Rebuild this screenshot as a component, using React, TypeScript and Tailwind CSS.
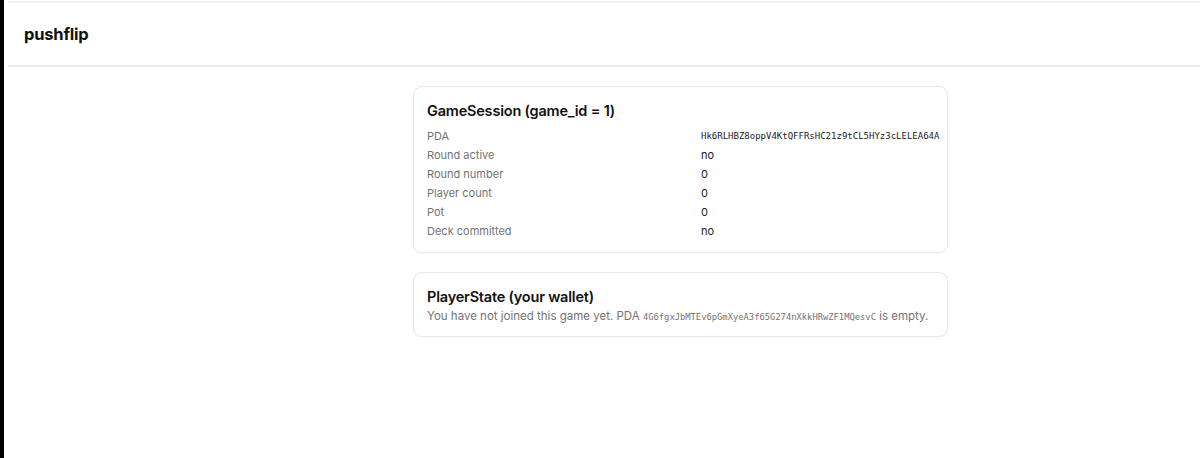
import React from "react";

const rows: [string, string, boolean?][] = [
  ["PDA", "Hk6RLHBZ8oppV4KtQFFRsHC21z9tCL5HYz3cLELEA64A", true],
  ["Round active", "no"],
  ["Round number", "0"],
  ["Player count", "0"],
  ["Pot", "0"],
  ["Deck committed", "no"],
];

export default function App() {
  return (
    <div
      className="flex h-[458px] w-[1200px] bg-white"
      style={{ fontFamily: "Inter, 'Noto Sans', sans-serif" }}
    >
      <div className="w-[4px] shrink-0 bg-black" />
      <div className="w-[4px] shrink-0 bg-white" />
      <div className="flex min-w-0 flex-1 flex-col">
        <div className="mt-[1px] h-[2px] bg-[#f1f1f1]" />
        <header className="flex h-[64px] items-center border-b-2 border-[#ececec] pl-[16px]">
          <span className="text-[16.5px] font-bold tracking-[-0.2px] text-[#111]">pushflip</span>
        </header>
        <main className="ml-[405px] mt-[19px] flex w-[535px] flex-col gap-[19px]">
          <section className="rounded-[9px] border border-[#e8e8e8] px-[13px] pb-[11px] pt-[14px] shadow-[0_1px_2px_rgba(0,0,0,0.03)]">
            <h2 className="h-[20px] text-[14.5px] font-semibold leading-[20px] tracking-[-0.2px] text-[#111]">
              GameSession (game_id = 1)
            </h2>
            <div className="mt-[6px] grid grid-cols-[274px_1fr]">
              {rows.map(([k, v, mono]) => (
                <React.Fragment key={k}>
                  <div className="h-[19px] text-[11px] leading-[19px] text-[#737373]">{k}</div>
                  <div
                    className={
                      mono
                        ? "h-[19px] text-[9px] leading-[19px] text-[#222]"
                        : "h-[19px] text-[11px] leading-[19px] text-[#222]"
                    }
                    style={mono ? { fontFamily: "'DejaVu Sans Mono', monospace" } : undefined}
                  >
                    {v}
                  </div>
                </React.Fragment>
              ))}
            </div>
          </section>
          <section className="rounded-[9px] border border-[#e8e8e8] px-[13px] pb-[11px] pt-[14px] shadow-[0_1px_2px_rgba(0,0,0,0.03)]">
            <h2 className="h-[20px] text-[14.5px] font-semibold leading-[20px] tracking-[-0.2px] text-[#111]">
              PlayerState (your wallet)
            </h2>
            <p className="mt-[1px] h-[17px] whitespace-nowrap text-[11.5px] leading-[17px] text-[#737373]">
              You have not joined this game yet. PDA{" "}
              <code className="text-[8.8px]" style={{ fontFamily: "'DejaVu Sans Mono', monospace" }}>
                4G6fgxJbMTEv6pGmXyeA3f65G274nXkkHRwZF1MQesvC
              </code>{" "}
              is empty.
            </p>
          </section>
        </main>
      </div>
    </div>
  );
}
